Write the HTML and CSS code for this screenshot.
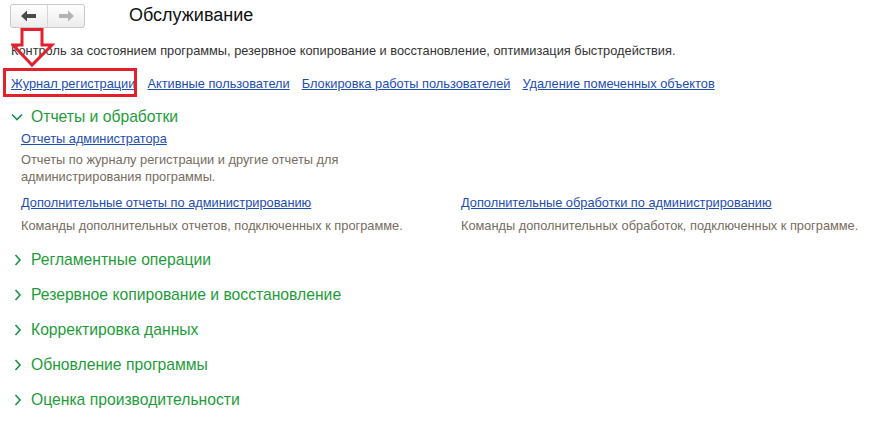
FILE: index.html
```html
<!DOCTYPE html>
<html lang="ru">

<head>
    <meta charset="UTF-8">
    <title>Обслуживание</title>
    <link rel="stylesheet" href="styles.css">
</head>

<body>
    <div class="page">
        <!-- Header: history buttons and title -->
        <div class="header">
            <div class="nav">
                <span class="nav-btn">
                    <svg width="16" height="12" viewBox="0 0 16 12"><path d="M0 6 L6 0.5 L6 4 L15 4 L15 8 L6 8 L6 11.5 Z" fill="#4a4a4a"/></svg>
                </span>
                <span class="nav-btn">
                    <svg width="16" height="12" viewBox="0 0 16 12"><path d="M16 6 L10 0.5 L10 4 L1 4 L1 8 L10 8 L10 11.5 Z" fill="#b4b4b4"/></svg>
                </span>
            </div>
            <h1>Обслуживание</h1>
        </div>

        <p class="intro">Контроль за состоянием программы, резервное копирование и восстановление, оптимизация быстродействия.</p>

        <div class="quick-links">
            <a href="#">Журнал регистрации</a>
            <a href="#">Активные пользователи</a>
            <a href="#">Блокировка работы пользователей</a>
            <a href="#">Удаление помеченных объектов</a>
        </div>

        <!-- Expanded group -->
        <div class="group">
            <div class="group-title">
                <svg class="chev" width="12" height="12" viewBox="0 0 12 12"><path d="M1 3.5 L6 8.5 L11 3.5" fill="none" stroke="#17924a" stroke-width="1.6"/></svg>
                Отчеты и обработки
            </div>
            <div class="group-body">
                <div class="item">
                    <a href="#">Отчеты администратора</a>
                    <p>Отчеты по журналу регистрации и другие отчеты для<br>администрирования программы.</p>
                </div>
                <div class="cols">
                    <div class="item">
                        <a href="#">Дополнительные отчеты по администрированию</a>
                        <p>Команды дополнительных отчетов, подключенных к программе.</p>
                    </div>
                    <div class="item">
                        <a href="#">Дополнительные обработки по администрированию</a>
                        <p>Команды дополнительных обработок, подключенных к программе.</p>
                    </div>
                </div>
            </div>
        </div>

        <!-- Collapsed groups -->
        <div class="group collapsed">
            <div class="group-title">
                <svg class="chev" width="12" height="12" viewBox="0 0 12 12"><path d="M4.5 1 L9 6 L4.5 11" fill="none" stroke="#17924a" stroke-width="1.6"/></svg>
                Регламентные операции
            </div>
        </div>
        <div class="group collapsed">
            <div class="group-title">
                <svg class="chev" width="12" height="12" viewBox="0 0 12 12"><path d="M4.5 1 L9 6 L4.5 11" fill="none" stroke="#17924a" stroke-width="1.6"/></svg>
                Резервное копирование и восстановление
            </div>
        </div>
        <div class="group collapsed">
            <div class="group-title">
                <svg class="chev" width="12" height="12" viewBox="0 0 12 12"><path d="M4.5 1 L9 6 L4.5 11" fill="none" stroke="#17924a" stroke-width="1.6"/></svg>
                Корректировка данных
            </div>
        </div>
        <div class="group collapsed">
            <div class="group-title">
                <svg class="chev" width="12" height="12" viewBox="0 0 12 12"><path d="M4.5 1 L9 6 L4.5 11" fill="none" stroke="#17924a" stroke-width="1.6"/></svg>
                Обновление программы
            </div>
        </div>
        <div class="group collapsed">
            <div class="group-title">
                <svg class="chev" width="12" height="12" viewBox="0 0 12 12"><path d="M4.5 1 L9 6 L4.5 11" fill="none" stroke="#17924a" stroke-width="1.6"/></svg>
                Оценка производительности
            </div>
        </div>
    </div>

    <!-- Red annotation over the first link -->
    <svg class="callout-arrow" width="44" height="40" viewBox="0 0 44 40">
        <path d="M11 1.5 L31 1.5 L31 17 L41 17 L21 37 L2 17 L11 17 Z" fill="none" stroke="#e3202b" stroke-width="3" stroke-linejoin="miter"/>
    </svg>
    <div class="callout-box"></div>
</body>

</html>
```

FILE: styles.css
```css
body {
    margin: 0;
    font-family: Arial, 'Liberation Sans', sans-serif;
    font-size: 12.8px;
    color: #333;
    background: #fff;
}

.page {
    padding: 4px 0 0 0;
}

.header {
    display: flex;
    align-items: center;
    height: 24px;
}

.nav {
    display: flex;
    margin-left: 10px;
    height: 22px;
    border: 1px solid #c9c9c9;
    border-radius: 3px;
    background: linear-gradient(#ffffff, #ececec);
}

.nav-btn {
    width: 36px;
    display: flex;
    align-items: center;
    justify-content: center;
}

.nav-btn + .nav-btn {
    border-left: 1px solid #d6d6d6;
}

h1 {
    margin: 0 0 0 44px;
    font-size: 18px;
    font-weight: normal;
    color: #111;
    line-height: 24px;
    position: relative;
    top: -1px;
}

.intro {
    margin: 15px 0 0 11px;
    line-height: 16px;
}

a {
    color: #1d4db3;
    text-decoration: underline;
}

.quick-links {
    display: flex;
    gap: 12px;
    margin: 17px 0 0 11px;
    line-height: 16px;
}

.group-title {
    display: flex;
    align-items: center;
    font-size: 15.7px;
    line-height: 20px;
    color: #1e9c3a;
}

.chev {
    margin: 0 8px 0 11px;
}

.group {
    margin-top: 15px;
}

.group:first-of-type {
    margin-top: 20px;
}

.group-body {
    padding-left: 21px;
    margin-top: 4px;
}

.item a {
    display: block;
    line-height: 16px;
}

.item p {
    margin: 5px 0 0 0;
    line-height: 16.5px;
    color: #766c60;
}

.cols {
    display: grid;
    grid-template-columns: 440px 1fr;
    margin-top: 10px;
}

.cols .item p {
    margin-top: 7px;
}

.callout-arrow {
    position: absolute;
    left: 11px;
    top: 28px;
}

.callout-box {
    position: absolute;
    left: 3px;
    top: 68px;
    width: 128px;
    height: 23px;
    border: 3px solid #e3202b;
}
```
